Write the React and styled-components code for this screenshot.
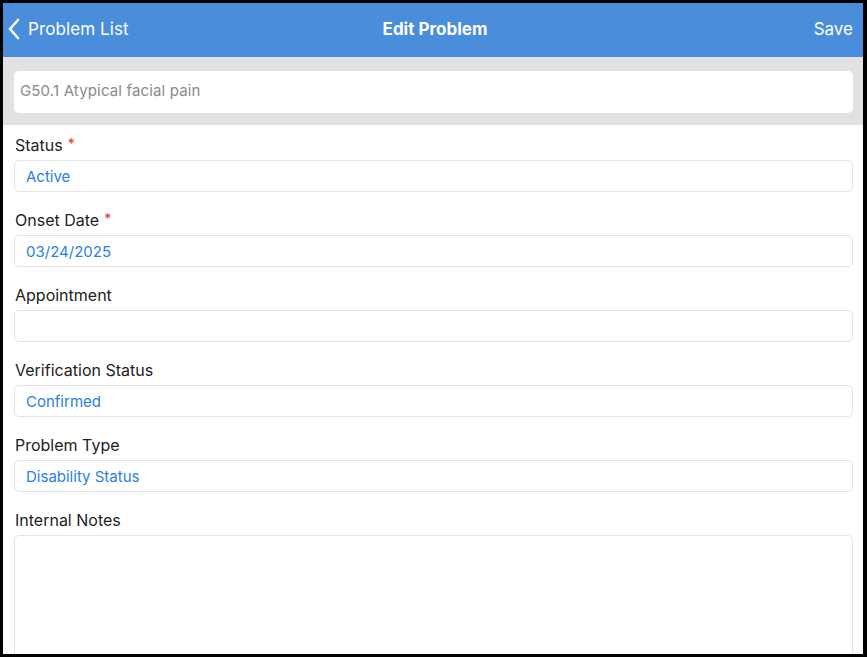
import React from "react";
import styled, { createGlobalStyle } from "styled-components";

const GlobalStyle = createGlobalStyle`
  html, body {
    margin: 0;
    padding: 0;
    background: #000;
  }
  * {
    box-sizing: border-box;
  }
`;

const fields = [
  { label: "Status", value: "Active", required: true },
  { label: "Onset Date", value: "03/24/2025", required: true },
  { label: "Appointment", value: "" },
  { label: "Verification Status", value: "Confirmed" },
  { label: "Problem Type", value: "Disability Status" },
];

export default function App() {
  return (
    <>
      <GlobalStyle />
      <Frame>
        <Screen>
          <NavBar>
            <BackButton>
              <svg width="14" height="22" viewBox="0 0 14 22">
                <polyline
                  points="11,2 3,11 11,20"
                  fill="none"
                  stroke="#fff"
                  strokeWidth="2.6"
                  strokeLinecap="round"
                  strokeLinejoin="round"
                />
              </svg>
              <span>Problem List</span>
            </BackButton>
            <NavTitle>Edit Problem</NavTitle>
            <NavAction>Save</NavAction>
          </NavBar>

          <ProblemBar>
            <ProblemInput>G50.1 Atypical facial pain</ProblemInput>
          </ProblemBar>

          <Form>
            {fields.map((f) => (
              <FieldGroup key={f.label}>
                <Label>
                  {f.label}
                  {f.required && <Required>*</Required>}
                </Label>
                <FieldBox>{f.value}</FieldBox>
              </FieldGroup>
            ))}
            <FieldGroup>
              <Label>Internal Notes</Label>
              <NotesBox />
            </FieldGroup>
          </Form>
        </Screen>
      </Frame>
    </>
  );
}

const Frame = styled.div`
  width: 867px;
  height: 657px;
  padding: 3px 4px 3px 3px;
  background: #000;
`;

const Screen = styled.div`
  width: 860px;
  height: 651px;
  background: #fff;
  overflow: hidden;
  display: flex;
  flex-direction: column;
  font-family: Inter, "Liberation Sans", sans-serif;
`;

const NavBar = styled.div`
  height: 54px;
  flex-shrink: 0;
  background: #4a8ddb;
  display: flex;
  align-items: center;
  justify-content: space-between;
  padding: 0 10px 3px 4px;
  position: relative;
  color: #fff;
  font-size: 17px;
`;

const BackButton = styled.div`
  display: flex;
  align-items: center;
  gap: 7px;
  letter-spacing: 0.1px;
`;

const NavTitle = styled.div`
  position: absolute;
  left: 0;
  right: 0;
  top: 0;
  bottom: 3px;
  display: flex;
  align-items: center;
  justify-content: center;
  font-weight: 700;
  pointer-events: none;
  padding-left: 4px;
`;

const NavAction = styled.div``;

const ProblemBar = styled.div`
  height: 68px;
  flex-shrink: 0;
  background: #e2e2e2;
  padding: 14px 10px 0 11px;
`;

const ProblemInput = styled.div`
  height: 42px;
  background: #fff;
  border-radius: 5px;
  display: flex;
  align-items: center;
  padding: 0 0 3px 6px;
  color: #8a8a8a;
  font-size: 15px;
  letter-spacing: 0.15px;
`;

const Form = styled.div`
  display: flex;
  flex-direction: column;
  gap: 17px;
  padding: 9px 10px 0 11px;
`;

const FieldGroup = styled.div`
  display: flex;
  flex-direction: column;
  gap: 4px;
`;

const Label = styled.div`
  height: 22px;
  line-height: 22px;
  font-size: 16px;
  color: #222;
  padding-left: 1px;
`;

const Required = styled.span`
  color: #e5302f;
  font-size: 14px;
  margin-left: 5px;
  position: relative;
  top: -2px;
`;

const FieldBox = styled.div`
  height: 32px;
  border: 1px solid #e3e3e3;
  border-radius: 5px;
  display: flex;
  align-items: center;
  padding-left: 11px;
  color: #2a7fe2;
  font-size: 15px;
`;

const NotesBox = styled.div`
  height: 130px;
  border: 1px solid #e3e3e3;
  border-radius: 5px;
`;
